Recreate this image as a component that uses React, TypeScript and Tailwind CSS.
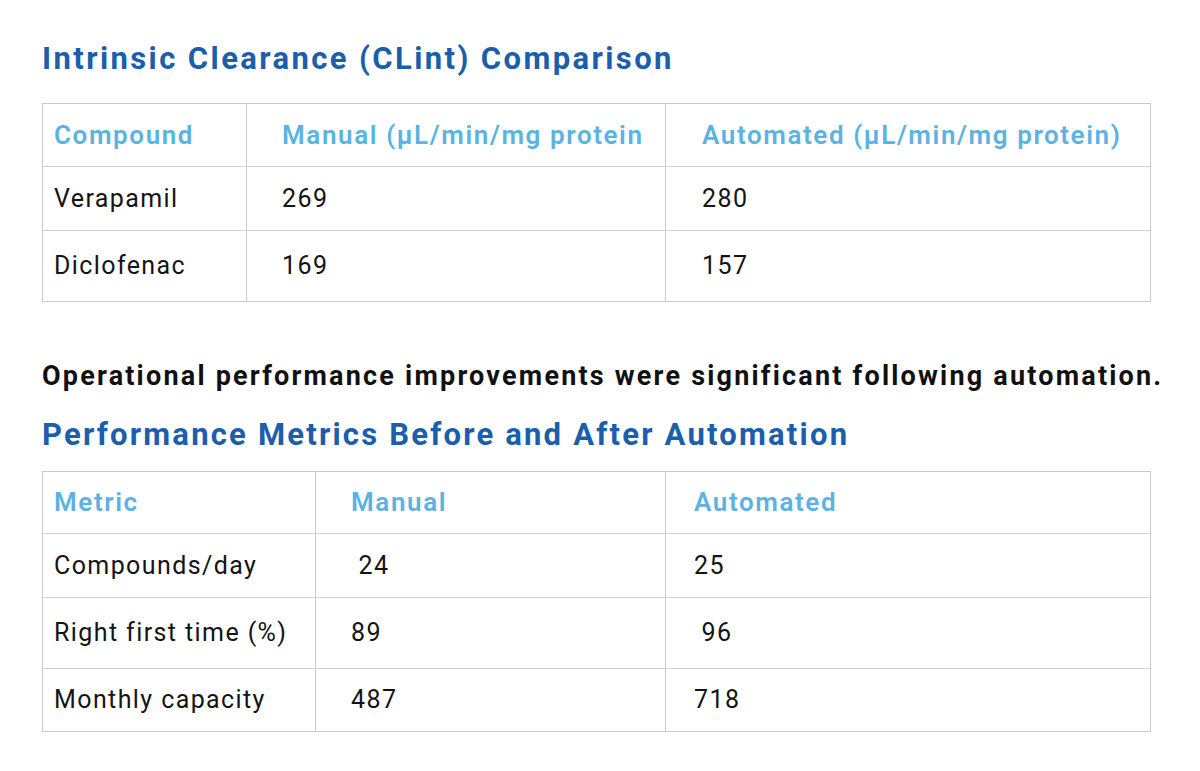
const font = { fontFamily: "Roboto, 'Liberation Sans', sans-serif" }

type Table = {
  cols: string[]
  widths: string[]
  pads: string[]
  rows: string[][]
  heights: string[]
}

const clint: Table = {
  cols: ["Compound", "Manual (µL/min/mg protein", "Automated (µL/min/mg protein)"],
  widths: ["w-[203px]", "w-[419px]", "flex-1"],
  pads: ["pl-[11px]", "pl-[35px]", "pl-[36px]"],
  rows: [
    ["Verapamil", "269", "280"],
    ["Diclofenac", "169", "157"],
  ],
  heights: ["h-[62px]", "h-[64px]", "h-[71px]"],
}

const perf: Table = {
  cols: ["Metric", "Manual", "Automated"],
  widths: ["w-[272px]", "w-[350px]", "flex-1"],
  pads: ["pl-[11px]", "pl-[35px]", "pl-[28px]"],
  rows: [
    ["Compounds/day", "\u00a024", "25"],
    ["Right first time (%)", "89", "\u00a096"],
    ["Monthly capacity", "487", "718"],
  ],
  heights: ["h-[61px]", "h-[64px]", "h-[71px]", "h-[63px]"],
}

function DataTable({ t }: { t: Table }) {
  const all = [t.cols, ...t.rows]
  return (
    <div className="w-[1109px] border border-[#c9c9c9]">
      {all.map((row, r) => (
        <div
          key={r}
          className={`flex ${t.heights[r]} ${r > 0 ? "border-t border-[#d2d2d2]" : ""}`}
        >
          {row.map((cell, c) => (
            <div
              key={c}
              className={`${t.widths[c]} ${t.pads[c]} flex items-center ${
                c > 0 ? "border-l border-[#c9c9c9]" : ""
              } ${
                r === 0
                  ? "text-[26px] font-semibold tracking-[1.6px] text-[#5bb3e3]"
                  : "text-[25px] tracking-[1.4px] text-[#141414]"
              }`}
            >
              <span className="whitespace-pre">{cell}</span>
            </div>
          ))}
        </div>
      ))}
    </div>
  )
}

export default function App() {
  return (
    <div className="w-[1200px] h-[771px] bg-white pl-[42px] pt-[38px]" style={font}>
      <h1 className="text-[31px] font-bold leading-[42px] tracking-[2.4px] text-[#1b5eab]">
        Intrinsic Clearance (CLint) Comparison
      </h1>
      <div className="mt-[23px]">
        <DataTable t={clint} />
      </div>
      <p className="mt-[57px] text-[27px] font-bold leading-[34px] tracking-[2.2px] text-[#111]">
        Operational performance improvements were significant following automation.
      </p>
      <h2 className="mt-[21px] text-[31px] font-bold leading-[42px] tracking-[2.2px] text-[#1b5eab]">
        Performance Metrics Before and After Automation
      </h2>
      <div className="mt-[15px]">
        <DataTable t={perf} />
      </div>
    </div>
  )
}
